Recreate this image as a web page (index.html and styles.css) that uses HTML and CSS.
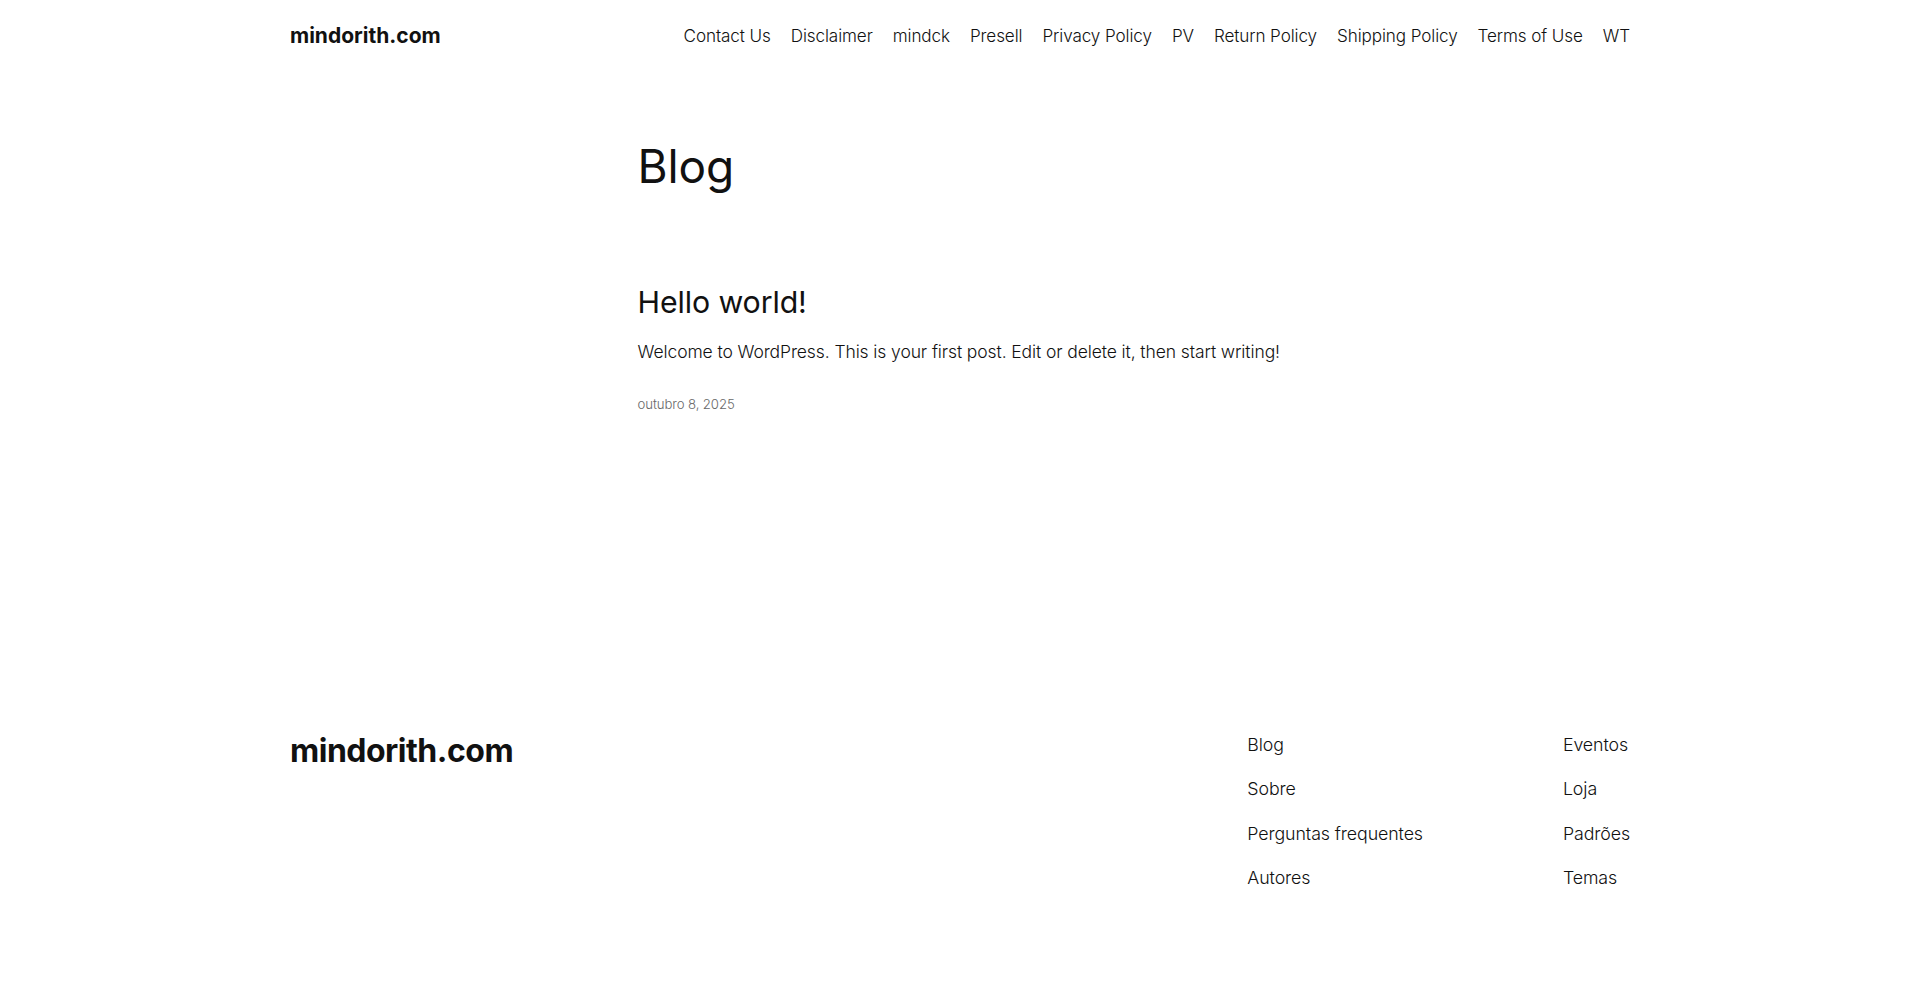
FILE: index.html
```html
<!DOCTYPE html>
<html lang="pt-BR">
<head>
<meta charset="utf-8">
<title>Blog – mindorith.com</title>
<link rel="stylesheet" href="styles.css">
</head>
<body>
<header class="site-header">
  <div class="header-row">
    <a class="site-title" href="#">mindorith.com</a>
    <nav class="main-nav">
      <a href="#">Contact Us</a>
      <a href="#">Disclaimer</a>
      <a href="#">mindck</a>
      <a href="#">Presell</a>
      <a href="#">Privacy Policy</a>
      <a href="#">PV</a>
      <a href="#">Return Policy</a>
      <a href="#">Shipping Policy</a>
      <a href="#">Terms of Use</a>
      <a href="#">WT</a>
    </nav>
  </div>
</header>
<main class="site-main">
  <h1 class="page-title">Blog</h1>
  <article class="post">
    <h2 class="post-title"><a href="#">Hello world!</a></h2>
    <p class="post-excerpt">Welcome to WordPress. This is your first post. Edit or delete it, then start writing!</p>
    <div class="post-date">outubro 8, 2025</div>
  </article>
</main>
<footer class="site-footer">
  <div class="footer-row">
    <a class="footer-title" href="#">mindorith.com</a>
    <div class="footer-navs">
      <nav class="footer-col">
        <a href="#">Blog</a>
        <a href="#">Sobre</a>
        <a href="#">Perguntas frequentes</a>
        <a href="#">Autores</a>
      </nav>
      <nav class="footer-col">
        <a href="#">Eventos</a>
        <a href="#">Loja</a>
        <a href="#">Padrões</a>
        <a href="#">Temas</a>
      </nav>
    </div>
  </div>
</footer>
</body>
</html>
```

FILE: styles.css
```css
* { box-sizing: border-box; }
html, body { margin: 0; padding: 0; }
body {
  background: #ffffff;
  color: #111111;
  font-family: Inter, "Noto Sans", sans-serif;
  font-weight: 300;
  font-size: 18px;
  line-height: 1.4;
  letter-spacing: -0.1px;
}
a { color: inherit; text-decoration: none; }

.site-header { padding: 21px 0 19px; }
.header-row {
  width: 1340px;
  margin: 0 auto;
  display: flex;
  justify-content: space-between;
  align-items: center;
  height: 30px;
}
.site-title {
  font-weight: 700;
  font-size: 21px;
  letter-spacing: 0;
}
.main-nav {
  display: flex;
  gap: 20px;
  font-size: 17.1px;
}

.site-main {
  width: 645px;
  margin: 71px auto 0;
}
.page-title {
  margin: 0;
  font-size: 46px;
  font-weight: 400;
  line-height: 1.125;
  letter-spacing: -0.1px;
}
.post { margin-top: 91px; }
.post-title {
  margin: 0;
  font-size: 30.3px;
  font-weight: 400;
  line-height: 1.2;
}
.post-excerpt {
  margin: 20px 0 0;
  font-size: 17.5px;
}
.post-date {
  margin-top: 30px;
  font-size: 13.2px;
  color: #686868;
}

.site-footer { margin-top: 320px; }
.footer-row {
  width: 1340px;
  margin: 0 auto;
  display: flex;
  justify-content: space-between;
  align-items: flex-start;
}
.footer-title {
  font-weight: 700;
  font-size: 32px;
  letter-spacing: -0.5px;
  line-height: 1.1;
}
.footer-navs {
  display: flex;
  gap: 140px;
}
.footer-col {
  display: flex;
  flex-direction: column;
  gap: 19.4px;
  font-size: 17.8px;
}
```
